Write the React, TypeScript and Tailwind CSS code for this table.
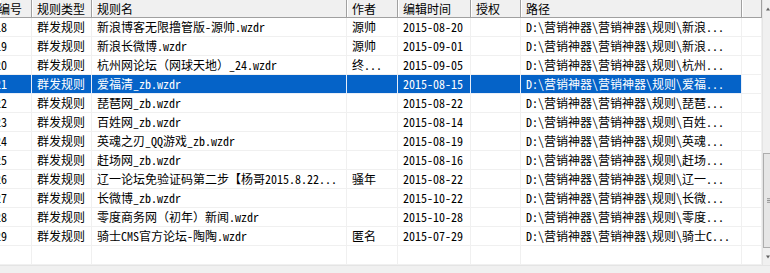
import React from "react";

type Row = {
  id: string;
  type: string;
  name: string;
  author: string;
  time: string;
  path: string;
};

const base = "D:\\营销神器\\营销神器\\规则\\";

const rows: Row[] = [
  { id: "18", type: "群发规则", name: "新浪博客无限撸管版-源帅.wzdr", author: "源帅", time: "2015-08-20", path: "新浪..." },
  { id: "19", type: "群发规则", name: "新浪长微博.wzdr", author: "源帅", time: "2015-09-01", path: "新浪..." },
  { id: "20", type: "群发规则", name: "杭州网论坛（网球天地）_24.wzdr", author: "终...", time: "2015-09-05", path: "杭州..." },
  { id: "21", type: "群发规则", name: "爱福清_zb.wzdr", author: "", time: "2015-08-15", path: "爱福..." },
  { id: "22", type: "群发规则", name: "琵琶网_zb.wzdr", author: "", time: "2015-08-22", path: "琵琶..." },
  { id: "23", type: "群发规则", name: "百姓网_zb.wzdr", author: "", time: "2015-08-14", path: "百姓..." },
  { id: "24", type: "群发规则", name: "英魂之刃_QQ游戏_zb.wzdr", author: "", time: "2015-08-19", path: "英魂..." },
  { id: "25", type: "群发规则", name: "赶场网_zb.wzdr", author: "", time: "2015-08-16", path: "赶场..." },
  { id: "26", type: "群发规则", name: "辽一论坛免验证码第二步【杨哥2015.8.22...", author: "骚年", time: "2015-08-22", path: "辽一..." },
  { id: "27", type: "群发规则", name: "长微博_zb.wzdr", author: "", time: "2015-10-22", path: "长微..." },
  { id: "28", type: "群发规则", name: "零度商务网（初年）新闻.wzdr", author: "", time: "2015-10-28", path: "零度..." },
  { id: "29", type: "群发规则", name: "骑士CMS官方论坛-陶陶.wzdr", author: "匿名", time: "2015-07-29", path: "骑士C..." },
];

const cols = "grid grid-cols-[32px_60px_255px_51px_73px_50px_221px_20px]";
const font = { fontFamily: '"Noto Sans Mono CJK SC", "Noto Sans CJK SC", monospace' };

function HeadCell({ label, first }: { label?: string; first?: boolean }) {
  return (
    <div className="h-[18px] bg-[#f0f0f0] border-r border-b border-[#a0a0a0] shadow-[inset_1px_0_0_#ffffff] overflow-hidden whitespace-nowrap flex items-center">
      <span className={first ? "-ml-[2px]" : "pl-[5px]"}>{label}</span>
    </div>
  );
}

function Cell({ children, selected, first, fill }: { children?: React.ReactNode; selected?: boolean; first?: boolean; fill?: boolean }) {
  const bg = selected && !fill ? "bg-[#0563c8] text-white border-[#e8eef8]" : "bg-white border-[#f0f0f0]";
  return (
    <div className={`h-[19px] border-r border-b ${bg} overflow-hidden whitespace-nowrap flex items-center`}>
      <span className={first ? "-ml-[5px]" : "pl-[5px]"}>{children}</span>
    </div>
  );
}

function Scrollbar() {
  return (
    <div className="w-[8px] h-[265px] bg-[#f0f0f0] flex flex-col border-l border-[#e4e4e4]">
      <div className="h-[17px] flex items-center pl-[3px]">
        <svg width="5" height="4" viewBox="0 0 5 4">
          <path d="M0 4 L2.5 0 L5 4 Z" fill="#606060" />
        </svg>
      </div>
      <div className="flex-1" />
      <div className="h-[95px] bg-[#e6e6e6] border-l border-t border-b border-[#adadad] flex items-center pl-[3px]">
        <svg width="5" height="7" viewBox="0 0 5 7">
          <path d="M0 0.5 H5 M0 3.5 H5 M0 6.5 H5" stroke="#606060" strokeWidth="1" />
        </svg>
      </div>
      <div className="h-[17px] flex items-center pl-[3px]">
        <svg width="5" height="4" viewBox="0 0 5 4">
          <path d="M0 0 L5 0 L2.5 4 Z" fill="#606060" />
        </svg>
      </div>
    </div>
  );
}

export default function App() {
  return (
    <div className="w-[770px] h-[273px] overflow-hidden bg-white text-[12px] text-black leading-none" style={font}>
      <div className="flex">
        <div className="w-[762px] h-[265px] overflow-hidden flex flex-col">
          <div className={`${cols} h-[19px] bg-white`}>
            <HeadCell label="编号" first />
            <HeadCell label="规则类型" />
            <HeadCell label="规则名" />
            <HeadCell label="作者" />
            <HeadCell label="编辑时间" />
            <HeadCell label="授权" />
            <HeadCell label="路径" />
            <HeadCell />
          </div>
          {rows.map((r) => {
            const sel = r.id === "21";
            return (
              <div key={r.id} className={cols}>
                <Cell selected={sel} first>{r.id}</Cell>
                <Cell selected={sel}>{r.type}</Cell>
                <Cell selected={sel}>{r.name}</Cell>
                <Cell selected={sel}>{r.author}</Cell>
                <Cell selected={sel}>{r.time}</Cell>
                <Cell selected={sel} />
                <Cell selected={sel}>{base + r.path}</Cell>
                <Cell selected={sel} fill />
              </div>
            );
          })}
          <div className={cols}>
            <Cell />
            <Cell />
            <Cell />
            <Cell />
            <Cell />
            <Cell />
            <Cell />
            <Cell fill />
          </div>
        </div>
        <Scrollbar />
      </div>
      <div className="h-[8px] bg-[#f0f0f0] border-t border-[#e4e4e4]" />
    </div>
  );
}
